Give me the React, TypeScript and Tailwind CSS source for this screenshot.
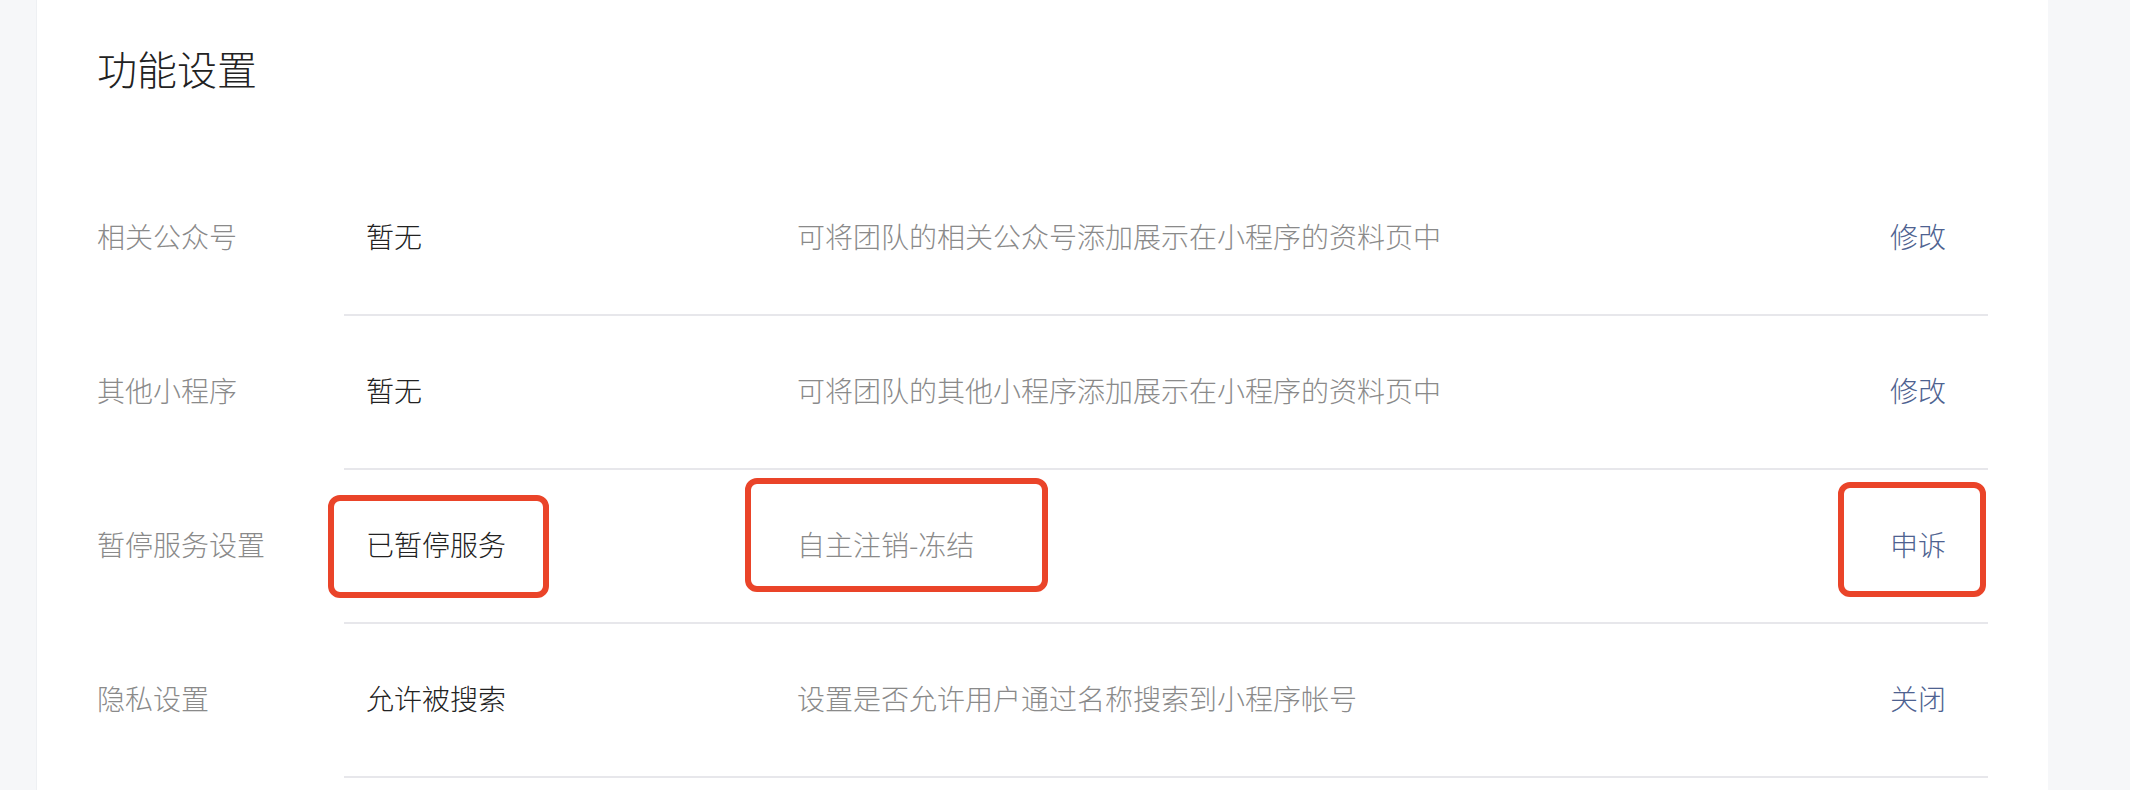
const font = { fontFamily: '"Noto Sans CJK SC", "Noto Sans", sans-serif' };

type Row = {
  label: string;
  value: string;
  desc: string;
  action: string;
  marked?: boolean;
};

const rows: Row[] = [
  { label: "相关公众号", value: "暂无", desc: "可将团队的相关公众号添加展示在小程序的资料页中", action: "修改" },
  { label: "其他小程序", value: "暂无", desc: "可将团队的其他小程序添加展示在小程序的资料页中", action: "修改" },
  { label: "暂停服务设置", value: "已暂停服务", desc: "自主注销-冻结", action: "申诉", marked: true },
  { label: "隐私设置", value: "允许被搜索", desc: "设置是否允许用户通过名称搜索到小程序帐号", action: "关闭" },
];

function SettingRow({ row }: { row: Row }) {
  return (
    <div className="flex h-[154px]">
      <div className="w-[247px] shrink-0 flex items-center pb-[6px] text-[28px] font-light text-[#8a8a8a]">
        {row.label}
      </div>
      <div className="relative flex-1 flex items-center pb-[4px] border-b-2 border-[#e7e7eb]">
        <div className="w-[453px] shrink-0 pl-[22px] text-[28px] font-light text-[#222]">{row.value}</div>
        <div className="flex-1 text-[28px] font-light text-[#8a8a8a]">{row.desc}</div>
        <a className="pr-[42px] text-[28px] font-light text-[#4e6290] cursor-pointer">{row.action}</a>

        {/* annotation boxes */}
        {row.marked && (
          <>
            <div className="absolute left-[-16px] top-[25px] w-[221px] h-[103px] border-[6px] border-[#ea4429] rounded-[12px] pointer-events-none" />
            <div className="absolute left-[401px] top-[8px] w-[303px] h-[114px] border-[6px] border-[#ea4429] rounded-[12px] pointer-events-none" />
            <div className="absolute right-[2px] top-[12px] w-[148px] h-[115px] border-[6px] border-[#ea4429] rounded-[12px] pointer-events-none" />
          </>
        )}
      </div>
    </div>
  );
}

export default function App() {
  return (
    <div className="h-[790px] w-full overflow-hidden bg-[#f6f7f9] flex" style={font}>
      <div className="ml-[36px] w-[2012px] h-full bg-white border-l border-[#eef0f3] pl-[60px] pt-[40px]">
        <h2 className="text-[40px] leading-[56px] font-light text-[#222]">功能设置</h2>
        <div className="mt-[66px] pr-[60px]">
          {rows.map((row) => (
            <SettingRow key={row.label} row={row} />
          ))}
        </div>
      </div>
    </div>
  );
}
